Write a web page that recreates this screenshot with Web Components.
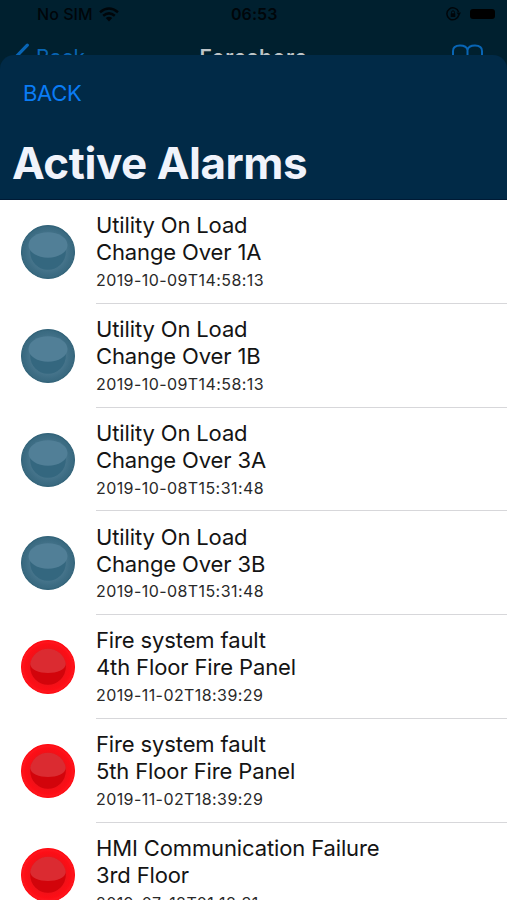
<!DOCTYPE html>
<html lang="en"><head><meta charset="utf-8"><title>Active Alarms</title>
<style>html,body{margin:0;height:900px;overflow:hidden;background:#fff}body{font-family:Inter,"Liberation Sans",sans-serif}</style></head>
<body><alarm-screen></alarm-screen>
<script>
const define=(name,html)=>customElements.define(name,class extends HTMLElement{
  constructor(){super();this.attachShadow({mode:'open'}).innerHTML=html;}
});
define('status-bar',`<style>
:host{display:flex;height:28px;align-items:center;color:#00060a;font-size:16px;line-height:28px}
.sim{margin-left:37px;letter-spacing:.05px;font-weight:500;width:62px;white-space:nowrap}
.time{margin-left:112px;width:60px;font-weight:600;letter-spacing:.05px;white-space:nowrap}
.lock{margin-left:155px}.bat{width:25px;height:10px;border-radius:3px;background:#000;margin-left:9px}
svg{display:block}
</style><span class="sim">No SIM</span>
<svg width="20" height="15" viewBox="0 0 20 15" fill="none" stroke="currentColor" stroke-width="2.5"><path d="M1 5.2Q10-2.2 19 5.2M4.2 8.7Q10 4 15.8 8.7"/><path d="M6.8 11.1Q10 8.5 13.2 11.1L10 14.4Z" fill="currentColor" stroke="none"/></svg>
<span class="time">06:53</span>
<svg class="lock" width="15" height="14" viewBox="0 0 15 14" fill="none" stroke="currentColor" stroke-width="1.5"><path d="M12.7 8.3A6 6 0 1 1 12.6 5"/><path d="M10.5 5.5H15L13 9Z" fill="currentColor" stroke="none"/><path d="M5.5 6.5V5.3a1.5 1.5 0 0 1 3 0v1.2" stroke-width="1"/><rect x="4.7" y="6.3" width="4.6" height="3.7" rx=".5" fill="currentColor" stroke="none"/></svg>
<i class="bat"></i>`);
define('page-behind',`<style>
:host{display:flex;height:27px;overflow:hidden;align-items:flex-start;font-size:21px;color:#0865b5}
svg{display:block;flex:none}.chev{margin:15px 0 0 15px}
span{line-height:26px;white-space:nowrap;margin-top:17px}
.back{margin-left:6px;width:60px}.title{margin-left:103.5px;width:130px;color:#bec4c7;font-weight:600;letter-spacing:.65px}
.book{margin:15px 0 0 121.5px}
</style><svg class="chev" width="15" height="26" viewBox="0 0 15 26" fill="none" stroke="currentColor" stroke-width="3.2" stroke-linecap="round"><path d="M12.3 2.2L2.2 12.6L12.3 23"/></svg>
<span class="back">Back</span><span class="title">Foreshore</span>
<svg class="book" width="32" height="25" viewBox="0 0 32 25" fill="none" stroke="currentColor" stroke-width="2"><path d="M16.5 23V7Q15.5 2.5 9 2.5Q2 2.5 2 8V21Q12 18 16.5 23Q20 18 31 21V8Q31 2.5 24 2.5Q17.5 2.5 16.5 7"/></svg>`);
define('sheet-header',`<style>
:host{display:block;height:145px;box-sizing:border-box;border-radius:14px 14px 0 0;background:#012a47;border-bottom:1px solid #001a35;padding:24.5px 12px 0;overflow:hidden}
.back{font-size:22px;line-height:26px;color:#0a7cf5;padding-left:11px;letter-spacing:-.3px}
h1{margin:32px 0 0;font-size:44px;line-height:50px;font-weight:700;color:#f0f3fb;letter-spacing:-.47px;white-space:nowrap}
</style><div class="back"><slot name="action"></slot></div><h1><slot></slot></h1>`);
customElements.define('alarm-lamp',class extends HTMLElement{
  connectedCallback(){
    const red=this.getAttribute('tone')==='red';
    const c=red?['#fd0e16','#f01118','#d2040b','#db2b31','#ff0910']:['#3c6c83','#47758c','#34677f','#517f97','#326379'];
    const rim=red?'#fd1a22':'#39697f';
    this.attachShadow({mode:'open'}).innerHTML=`<style>:host{display:block;width:54px;height:54px}svg{display:block}</style>
<svg width="54" height="54" viewBox="0 0 54 54"><defs><radialGradient id="g"><stop offset=".65" stop-color="${c[1]}"/><stop offset=".87" stop-color="${c[0]}"/><stop offset="1" stop-color="${rim}"/></radialGradient></defs>
<circle cx="27" cy="27" r="26.4" fill="url(#g)" stroke="${c[4]}" stroke-width="1.2"/>
<circle cx="27" cy="27" r="17.8" fill="${c[2]}"/>${red?
`<path d="M9.2 24A18 18 0 0 1 44.8 24C44 36 10 36 9.2 24Z" fill="${c[3]}"/>`:
`<ellipse cx="27" cy="20" rx="19.5" ry="12.7" fill="${c[3]}"/>`}</svg>`;
  }
});
define('alarm-row',`<style>
:host{display:flex;height:103.82px;box-sizing:border-box;flex:none}
.icon{width:75px;padding:25px 0 0 21px;box-sizing:border-box;flex:none}
.text{margin-left:21px;flex:1;min-width:0;box-sizing:border-box;border-bottom:1.3px solid #d7d7da;padding-top:12.2px;color:#141414}
.line{font-size:22px;line-height:27px;white-space:nowrap;letter-spacing:-.13px}
.date{font-size:16px;line-height:22px;margin-top:2.8px;color:#292929;letter-spacing:.42px;white-space:nowrap}
</style><div class="icon"><slot name="lamp"></slot></div><div class="text"><div class="line"><slot name="title"></slot></div><div class="line"><slot name="source"></slot></div><div class="date"><slot name="date"></slot></div></div>`);
const rows=[['blue','Utility On Load','Change Over 1A','2019-10-09T14:58:13'],['blue','Utility On Load','Change Over 1B','2019-10-09T14:58:13'],['blue','Utility On Load','Change Over 3A','2019-10-08T15:31:48'],['blue','Utility On Load','Change Over 3B','2019-10-08T15:31:48'],['red','Fire system fault','4th Floor Fire Panel','2019-11-02T18:39:29'],['red','Fire system fault','5th Floor Fire Panel','2019-11-02T18:39:29'],['red','HMI Communication Failure','3rd Floor','2019-07-18T01:18:31']];
define('alarm-screen',`<style>
:host{display:flex;flex-direction:column;width:507px;height:900px;overflow:hidden;background:#fff}
.top{background:#00202f;height:200px;flex:none}main{display:flex;flex-direction:column}
</style><div class="top"><status-bar></status-bar><page-behind></page-behind><sheet-header><span slot="action">BACK</span>Active Alarms</sheet-header></div>
<main>${rows.map(r=>`<alarm-row><alarm-lamp slot="lamp" tone="${r[0]}"></alarm-lamp><span slot="title">${r[1]}</span><span slot="source">${r[2]}</span><span slot="date">${r[3]}</span></alarm-row>`).join('')}</main>`);
</script></body></html>
